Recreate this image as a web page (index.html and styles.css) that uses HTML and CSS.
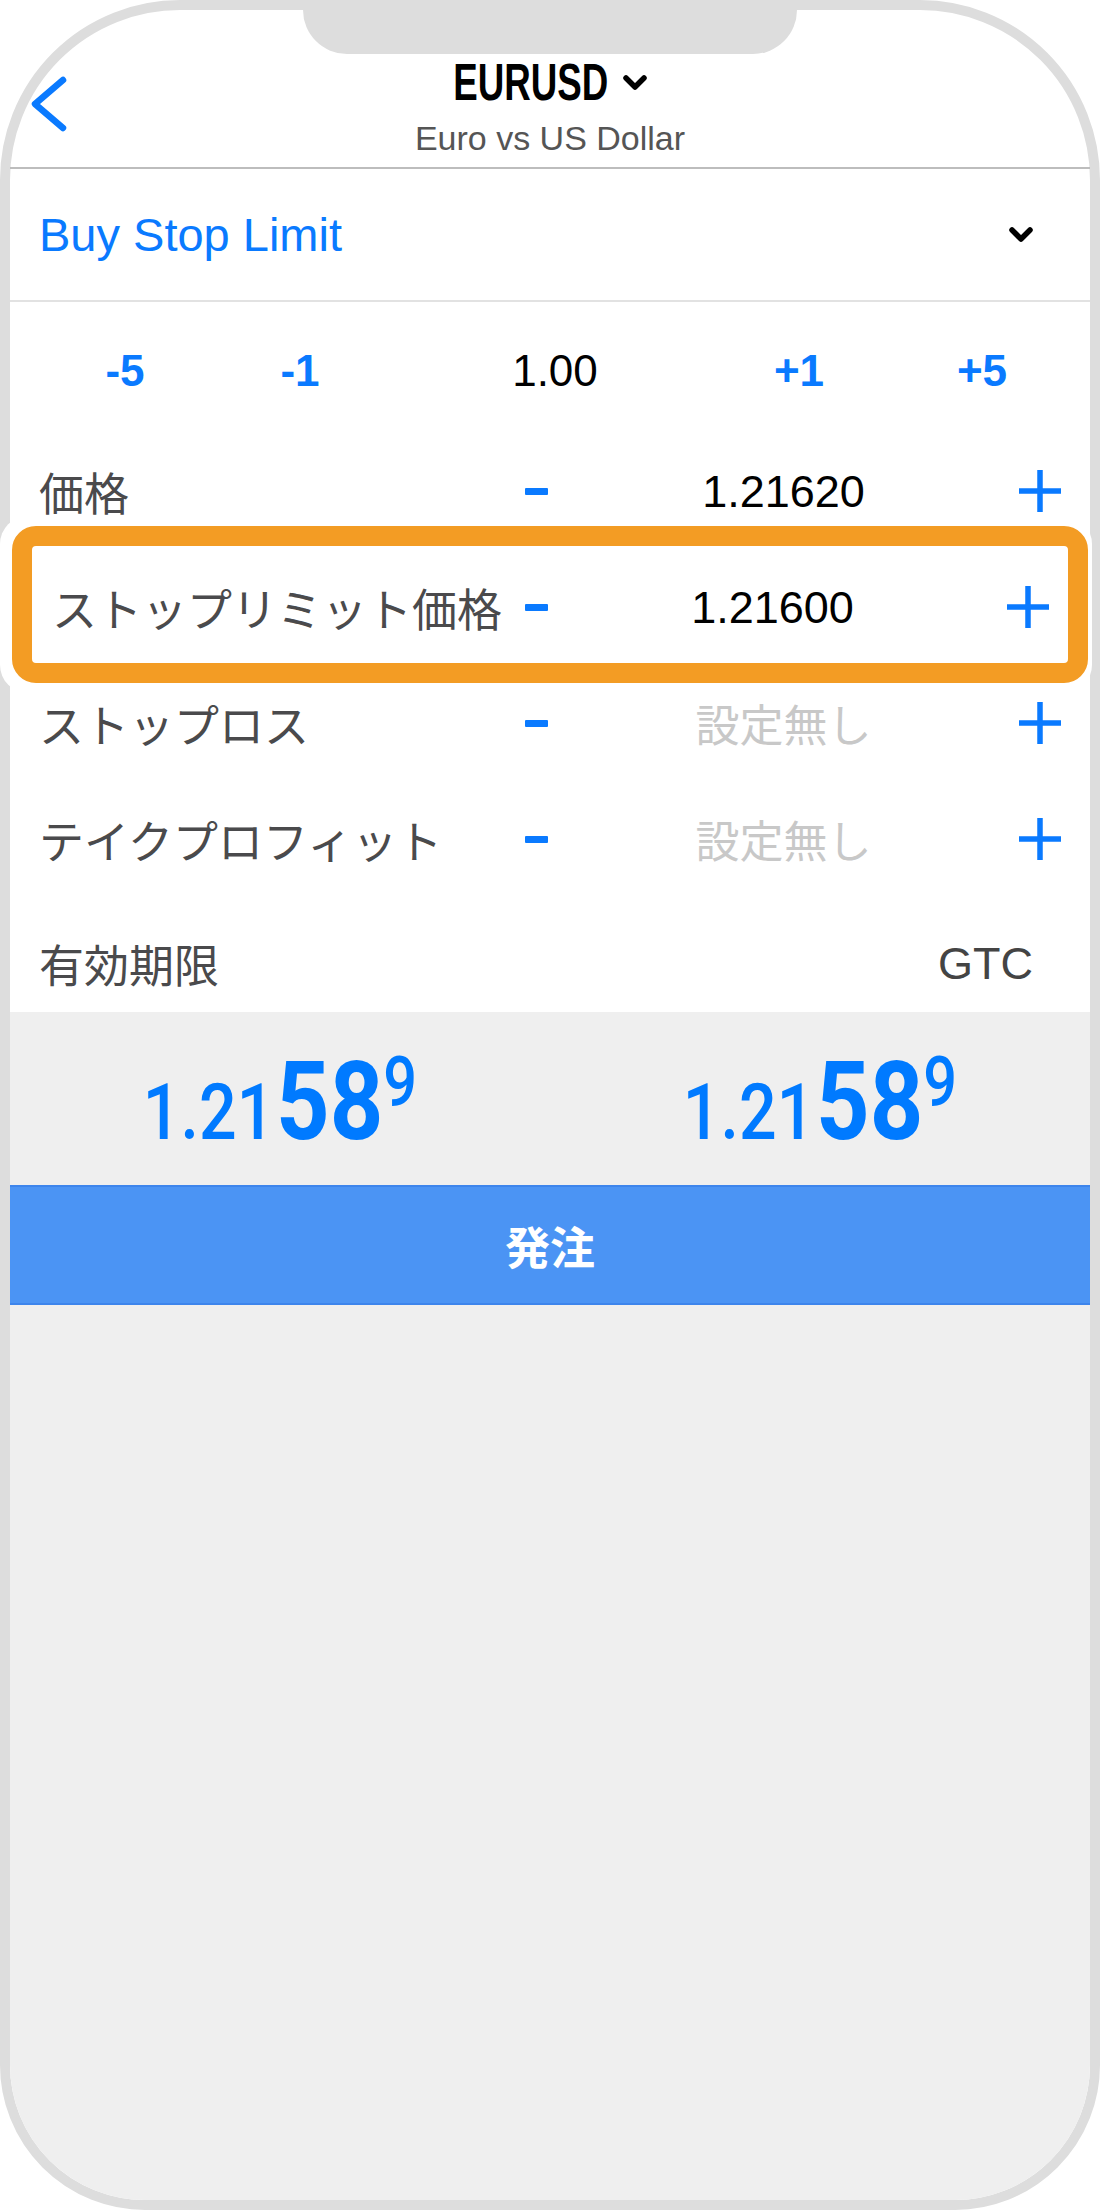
FILE: index.html
```html
<!DOCTYPE html>
<html lang="ja">
<head>
    <meta charset="utf-8">
    <title>EURUSD 注文</title>
    <link rel="stylesheet" href="styles.css">
</head>

<body>
    <div class="phone">
        <div class="notch"></div>

        <header class="nav">
            <a class="back" href="#">
                <svg width="40" height="60" viewBox="0 0 40 60"><polyline points="33,6 5,30 33,54" /></svg>
            </a>
            <div class="title">
                <div class="symbol">
                    <span class="symbol-name">EURUSD</span>
                    <svg class="chev" width="24" height="15" viewBox="0 0 24 15"><polyline points="3,3 12,12 21,3" /></svg>
                </div>
                <div class="desc">Euro vs US Dollar</div>
            </div>
            <div></div>
        </header>

        <div class="order-type">
            <span>Buy Stop Limit</span>
            <svg class="chev" width="24" height="15" viewBox="0 0 24 15"><polyline points="3,3 12,12 21,3" /></svg>
        </div>

        <div class="volume">
            <span class="step">-5</span>
            <span class="step">-1</span>
            <span class="lots">1.00</span>
            <span class="step">+1</span>
            <span class="step">+5</span>
        </div>

        <div class="field">
            <span class="label">価格</span>
            <span class="minus"></span>
            <span class="value">1.21620</span>
            <svg class="plus" width="42" height="42" viewBox="0 0 42 42"><path d="M21 0V42M0 21H42" /></svg>
        </div>
        <div class="field field-marked">
            <span class="label">ストップリミット価格</span>
            <span class="minus"></span>
            <span class="value">1.21600</span>
            <svg class="plus" width="42" height="42" viewBox="0 0 42 42"><path d="M21 0V42M0 21H42" /></svg>
        </div>
        <div class="field">
            <span class="label">ストップロス</span>
            <span class="minus"></span>
            <span class="value empty">設定無し</span>
            <svg class="plus" width="42" height="42" viewBox="0 0 42 42"><path d="M21 0V42M0 21H42" /></svg>
        </div>
        <div class="field">
            <span class="label">テイクプロフィット</span>
            <span class="minus"></span>
            <span class="value empty">設定無し</span>
            <svg class="plus" width="42" height="42" viewBox="0 0 42 42"><path d="M21 0V42M0 21H42" /></svg>
        </div>
        <div class="expiry">
            <span class="label">有効期限</span>
            <span class="gtc">GTC</span>
        </div>

        <div class="bottom">
            <div class="quotes">
                <div class="quote"><span class="q-big">1.21</span><span class="q-pips">58</span><span class="q-point">9</span></div>
                <div class="quote"><span class="q-big">1.21</span><span class="q-pips">58</span><span class="q-point">9</span></div>
            </div>
            <button class="submit">発注</button>
        </div>
    </div>
</body>

</html>
```

FILE: styles.css
```css
* {
    box-sizing: border-box;
}

body {
    margin: 0;
    background-color: #fff;
    font-family: "Liberation Sans", "Noto Sans CJK JP", sans-serif;
}

.phone {
    position: relative;
    width: 1100px;
    height: 2210px;
    border: 10px solid #dddddd;
    border-radius: 180px 180px 145px 145px;
    background-color: #fff;
    display: flex;
    flex-direction: column;
}

.notch {
    position: absolute;
    top: -10px;
    left: 293px;
    width: 494px;
    height: 54px;
    background-color: #dddddd;
    border-radius: 0 0 44px 44px;
}

/* header */
.nav {
    display: grid;
    grid-template-columns: 1fr auto 1fr;
    height: 159px;
    border-bottom: 2px solid #bdbdbd;
}

.back svg {
    display: block;
    margin: 64px 0 0 20px;
    fill: none;
    stroke: #0a7aff;
    stroke-width: 6.5;
    stroke-linecap: round;
    stroke-linejoin: round;
}

.title {
    padding-top: 47px;
    text-align: center;
}

.symbol {
    display: flex;
    justify-content: center;
    align-items: center;
    height: 50px;
    font-size: 51px;
    line-height: 1;
    font-weight: bold;
    color: #000;
}

.symbol-name {
    display: inline-block;
    transform: scaleX(.72);
    margin: 0 -30px;
}

.symbol .chev {
    margin-left: 14px;
}

.chev {
    display: block;
    fill: none;
    stroke: #000;
    stroke-width: 5.5;
    stroke-linecap: round;
    stroke-linejoin: round;
}

.desc {
    margin-top: 14px;
    font-size: 34px;
    line-height: 1;
    color: #555;
}

/* order type */
.order-type {
    display: flex;
    justify-content: space-between;
    align-items: center;
    height: 133px;
    padding: 0 57px 0 29px;
    border-bottom: 2px solid #e2e2e2;
    font-size: 47px;
    line-height: 1;
    color: #0a7aff;
}

/* volume */
.volume {
    display: grid;
    grid-template-columns: 175px 255px 244px 183px 120px;
    align-items: center;
    height: 131px;
    padding: 7px 0 0 55px;
    font-size: 44px;
    line-height: 1;
}

.volume span {
    width: 120px;
    text-align: center;
}

.step {
    color: #0a7aff;
    font-weight: bold;
}

.lots {
    color: #000;
}

/* fields */
.field {
    display: grid;
    grid-template-columns: 486px 23px 1fr 42px;
    align-items: center;
    height: 116px;
    padding: 0 29px;
    line-height: 1;
}

.label {
    font-family: "Noto Sans CJK JP", sans-serif;
    font-size: 45px;
    color: #4a4a4c;
}

.minus {
    height: 7px;
    border-radius: 1px;
    background-color: #0a7aff;
}

.value {
    text-align: center;
    font-size: 45px;
    color: #000;
}

.value.empty {
    font-family: "Noto Sans CJK JP", sans-serif;
    font-size: 44px;
    color: #c8c8c8;
}

.plus {
    display: block;
    fill: none;
    stroke: #0a7aff;
    stroke-width: 5.5;
}

.field-marked {
    position: relative;
    z-index: 1;
    grid-template-columns: 473px 23px 1fr 42px;
    padding: 0 41px 0 42px;
}

.field-marked .value {
    padding-right: 10px;
}

.field-marked::before {
    content: "";
    position: absolute;
    z-index: -1;
    left: -10px;
    right: -2px;
    top: -33px;
    bottom: -28px;
    border-radius: 28px;
    background-color: #fff;
}

.field-marked::after {
    content: "";
    position: absolute;
    left: 2px;
    right: 2px;
    top: -23px;
    bottom: -18px;
    border: 20px solid #f39c24;
    border-radius: 24px;
}

.expiry {
    display: flex;
    justify-content: space-between;
    align-items: center;
    height: 115px;
    padding: 17px 57px 0 29px;
    line-height: 1;
}

.gtc {
    font-size: 45px;
    color: #444;
}

/* bottom */
.bottom {
    flex: 1;
    display: flex;
    flex-direction: column;
    background-color: #efefef;
    border-radius: 0 0 135px 135px;
}

.quotes {
    display: grid;
    grid-template-columns: 1fr 1fr;
    height: 173px;
    padding-top: 35px;
}

.quote {
    display: flex;
    justify-content: center;
    align-items: baseline;
    font-family: Roboto, sans-serif;
    line-height: 1;
    color: #007aff;
    transform: scaleX(.85);
}

.q-big {
    font-size: 78px;
    font-weight: 500;
    margin-right: 2px;
}

.q-pips {
    font-size: 110px;
    font-weight: bold;
}

.q-point {
    align-self: flex-start;
    font-size: 70px;
    font-weight: 500;
}

.submit {
    display: block;
    width: 100%;
    height: 120px;
    margin: 0;
    padding: 0;
    border: none;
    border-top: 2px solid #3d85ec;
    border-bottom: 2px solid #3d85ec;
    background-color: #4b94f4;
    color: #fff;
    font-family: "Noto Sans CJK JP", sans-serif;
    font-size: 45px;
    font-weight: bold;
}
```
